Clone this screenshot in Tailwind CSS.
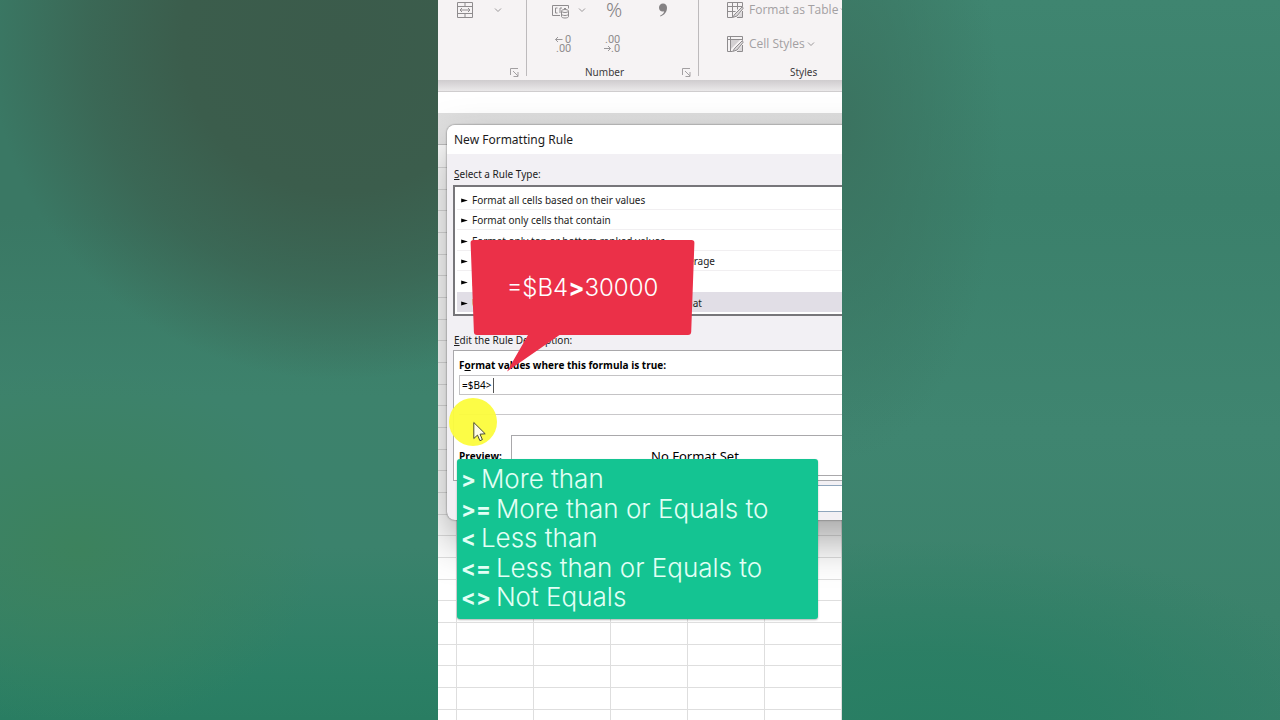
<!DOCTYPE html>
<html lang="en">
<head>
    <meta charset="UTF-8">
    <meta name="viewport" content="width=device-width, initial-scale=1.0">
    <title>New Formatting Rule</title>
    <script src="https://cdn.jsdelivr.net/npm/@tailwindcss/browser@4"></script>
</head>
<body class="flex h-screen overflow-hidden bg-[#3e836d] font-['Noto_Sans','Open_Sans',sans-serif]">

<!-- Left backdrop -->
<div class="flex-1 bg-[radial-gradient(ellipse_350px_340px_at_340px_40px,#3b5b4b_0%,#3b5d4c_45%,#3b5d4c99_72%,#3b5d4c00_100%),radial-gradient(ellipse_240px_180px_at_80px_550px,#3c825d_0%,#3c825d00_100%),linear-gradient(to_bottom,#3a7864_0%,#3a7864_30%,#3d826c_55%,#3b826c_76%,#2b7f65_94%,#297d62_100%)]"></div>

<!-- Video frame -->
<main class="relative flex h-full w-101 shrink-0 flex-col overflow-hidden bg-white">

    <!-- Ribbon -->
    <header class="flex h-20 shrink-0 bg-[#f6f3f4] text-[#a3a0a2]">
        <section class="flex w-[88px] shrink-0 flex-col">
            <div class="flex h-5 items-center gap-5 pl-[18px]">
                <button aria-label="Merge and center">
                    <svg class="size-[18px]" viewBox="0 0 18 18" fill="none" stroke="#8f8c8e"><path d="M1.500 1.500h15v15h-15zM1.500 5.500h15M1.500 12.500h15M9 1.500v4M9 12.500v4M4 9h10M6 7l-2 2 2 2M12 7l2 2-2 2"/></svg>
                </button>
                <button aria-label="Merge options">
                    <svg class="size-2" viewBox="0 0 8 8" fill="none" stroke="#9b989a"><path d="M1 2.500l3 3 3-3"/></svg>
                </button>
            </div>
            <div class="mt-auto flex h-4 items-center justify-end pr-[7px]">
                <button aria-label="Alignment settings">
                    <svg class="size-[9px]" viewBox="0 0 9 9" fill="none" stroke="#a3a0a2"><path d="M.5 7V.5H8M3 3l5 5M8 4v4.500H3.500"/></svg>
                </button>
            </div>
        </section>
        <div class="h-[76px] w-px shrink-0 bg-[#bdbabc]"></div>

        <section class="flex w-[171px] shrink-0 flex-col">
            <div class="flex h-5 items-center pl-6">
                <button aria-label="Accounting format">
                    <svg class="h-[18px] w-5" viewBox="0 0 20 18" fill="none" stroke="#8f8c8e"><path d="M9 14.500H1.500v-10h16v3M6.500 7H4.500v5h2M11 7H9v5M13 7.500h2"/><path fill="#f6f3f4" d="M10.500 10v5.500c0 2 7 2 7 0V10"/><ellipse cx="14" cy="10" rx="3.500" ry="1.500" fill="#f6f3f4"/><path d="M10.500 13c0 2 7 2 7 0"/></svg>
                </button>
                <button aria-label="Accounting options" class="ml-[7px]">
                    <svg class="size-2" viewBox="0 0 8 8" fill="none" stroke="#9b989a"><path d="M1 2.500l3 3 3-3"/></svg>
                </button>
                <button class="ml-5 text-xl leading-5 font-light text-[#858284]">%</button>
                <button aria-label="Comma style" class="ml-9">
                    <svg class="h-[14px] w-[10px]" viewBox="0 0 10 14" fill="#858284"><path d="M5 .5C7.500.5 9 2.300 9 4.800 9 9 6.500 12 2.500 13.500L2 12.800C4.500 11.500 6 10 6.200 8.200 5.700 8.500 5.200 8.600 4.600 8.600 2.500 8.600 1 7 1 4.800 1 2.300 2.700.5 5 .5z"/></svg>
                </button>
            </div>
            <div class="mt-3 flex h-6 items-center gap-[29px] pl-[27px]">
                <button aria-label="Increase decimal">
                    <svg class="h-[18px] w-5" viewBox="0 0 20 18" fill="#8f8c8e" font-family="Roboto" font-size="11"><path d="M8.500 4.500H1.500M4 2L1.500 4.500 4 7" fill="none" stroke="#9b989a"/><text x="11" y="8">0</text><text x="2" y="17">.00</text></svg>
                </button>
                <button aria-label="Decrease decimal">
                    <svg class="h-[18px] w-5" viewBox="0 0 20 18" fill="#8f8c8e" font-family="Roboto" font-size="11"><path d="M1 13.500h6.500M5 11l2.500 2.500L5 16" fill="none" stroke="#9b989a"/><text x="2" y="8">.00</text><text x="8" y="17">.0</text></svg>
                </button>
            </div>
            <div class="mt-auto flex h-4 items-center justify-end pr-[7px]">
                <h2 class="flex-1 pl-[58px] text-[10px] leading-4 text-[#3c3a3c]">Number</h2>
                <button aria-label="Number settings">
                    <svg class="size-[9px]" viewBox="0 0 9 9" fill="none" stroke="#a3a0a2"><path d="M.5 7V.5H8M3 3l5 5M8 4v4.500H3.500"/></svg>
                </button>
            </div>
        </section>
        <div class="h-[76px] w-px shrink-0 bg-[#bdbabc]"></div>

        <section class="flex w-[210px] shrink-0 flex-col pl-[27px]">
            <button class="flex h-5 items-center gap-[5px]">
                <svg class="size-[18px]" viewBox="0 0 18 18" fill="none" stroke="#8f8c8e"><path d="M16.500 5V1.500h-15v15H6M1.500 5.500h15M1.500 10.500h8M6.500 1.500v15M11.500 1.500v7"/><path d="M16.500 5.500L9 13l-2.500 3.500L11 15l6-7.500zM16.500 10v6.500H11" fill="#dcd9db"/></svg>
                <span class="font-['Open_Sans'] text-xs">Format as Table</span>
                <svg class="-ml-[3px] size-2" viewBox="0 0 8 8" fill="none" stroke="#9b989a"><path d="M1 2.500l3 3 3-3"/></svg>
            </button>
            <button class="mt-3 flex h-6 items-center gap-[5px]">
                <svg class="size-[18px]" viewBox="0 0 18 18" fill="none" stroke="#8f8c8e"><path d="M5 5h9L5 14z" fill="#d3d0d2" stroke="none"/><path d="M16.500 5V1.500h-15v15H6M1.500 4.500h15M4.500 1.500v15"/><path d="M16.500 5.500L9 13l-2.500 3.500L11 15l6-7.500zM16.500 10v6.500H11" fill="#dcd9db"/></svg>
                <span class="font-['Open_Sans'] text-xs">Cell Styles</span>
                <svg class="-ml-[3px] size-2" viewBox="0 0 8 8" fill="none" stroke="#9b989a"><path d="M1 2.500l3 3 3-3"/></svg>
            </button>
            <h2 class="mt-auto h-4 pl-16 text-[10px] leading-4 text-[#3c3a3c]">Styles</h2>
        </section>
    </header>

    <!-- Formula bar and column headers -->
    <div class="h-3 shrink-0 border-b border-[#cfcdce] bg-linear-to-b from-[#cfccce] to-[#ebe9ea]"></div>
    <div class="h-[21px] shrink-0 bg-white"></div>
    <div class="h-8 shrink-0 border-b border-[#bfbfbf] bg-linear-to-b from-[#dedede] to-[#e6e6e6]"></div>

    <!-- Sheet -->
    <table class="w-[480px] shrink-0 table-fixed border-collapse">
        <colgroup>
            <col class="w-[18px]"><col class="w-[77px]"><col class="w-[77px]"><col class="w-[77px]"><col class="w-[77px]"><col class="w-[77px]"><col class="w-[77px]">
        </colgroup>
        <tbody id="sheet"></tbody>
    </table>

    <!-- Dialog -->
    <form class="absolute left-[9px] top-[125px] flex w-[540px] flex-col overflow-hidden rounded-lg bg-[#f2f0f4] text-[10px] text-[#1c1c1c] shadow-[0_20px_44px_rgba(0,0,0,0.36),0_0_2px_rgba(0,0,0,0.6)]">
        <h1 class="h-[29px] bg-white pl-[7px] text-xs leading-[29px]">New Formatting Rule</h1>
        <div class="flex flex-col px-[6px]">
            <p class="mt-[10px] h-5 pl-px leading-5"><u>S</u>elect a Rule Type:</p>
            <ul class="mt-[1px] border-2 border-[#77767a] bg-white p-[2px]">
                <li class="flex h-[21px] items-center gap-1 border-b border-[#f1eff1] pl-1 pt-[2px]"><svg class="h-[5px] w-[7px]" viewBox="0 0 8 6"><path d="M0 .5L8 3 0 5.500z"/></svg>Format all cells based on their values</li>
                <li class="flex h-5 items-center gap-1 border-b border-[#f1eff1] pl-1 pt-[2px]"><svg class="h-[5px] w-[7px]" viewBox="0 0 8 6"><path d="M0 .5L8 3 0 5.500z"/></svg>Format only cells that contain</li>
                <li class="flex h-[21px] items-center gap-1 border-b border-[#f1eff1] pl-1 pt-[2px]"><svg class="h-[5px] w-[7px]" viewBox="0 0 8 6"><path d="M0 .5L8 3 0 5.500z"/></svg>Format only top or bottom ranked values</li>
                <li class="flex h-5 items-center gap-1 border-b border-[#f1eff1] pl-1 pt-[2px]"><svg class="h-[5px] w-[7px]" viewBox="0 0 8 6"><path d="M0 .5L8 3 0 5.500z"/></svg>Format only values that are above or below average</li>
                <li class="flex h-[21px] items-center gap-1 pl-1 pt-[2px]"><svg class="h-[5px] w-[7px]" viewBox="0 0 8 6"><path d="M0 .5L8 3 0 5.500z"/></svg>Format only unique or duplicate values</li>
                <li class="flex h-5 items-center gap-1 bg-[#e1dee6] pl-1 pt-[2px]"><svg class="h-[5px] w-[7px]" viewBox="0 0 8 6"><path d="M0 .5L8 3 0 5.500z"/></svg>Use a formula to determine which cells to format</li>
            </ul>
            <p class="mt-[14px] h-5 pl-px leading-5"><u>E</u>dit the Rule Description:</p>
            <div class="flex h-[131px] flex-col border border-[#a9a8ab] bg-white pl-[5px]">
                <label for="formula" class="mt-1 h-5 font-['Open_Sans'] font-bold leading-5 text-black">F<u>o</u>rmat values where this formula is true:</label>
                <input id="formula" type="text" value="=$B4&gt;" class="h-5 border border-[#c4c3c5] px-[2px] text-black outline-none">
                <hr class="mt-[19px] border-[#c9c8ca]">
                <div class="mt-5 flex h-[41px] gap-[9px]">
                    <span class="w-[43px] pt-[13px] font-['Open_Sans'] font-bold leading-4 text-black">Preview:</span>
                    <div class="w-[368px] border border-[#a9a8ab] pt-3 text-center text-[13px] leading-4 text-black">No Format Set</div>
                    <button type="button" class="self-center border border-[#a9a8ab] px-4">Format...</button>
                </div>
            </div>
            <div class="mb-2 mt-1 flex h-[27px] justify-end gap-2">
                <button type="button" class="w-[100px] border border-[#8fa6bd] bg-white">OK</button>
                <button type="button" class="w-[60px] border border-[#a9a8ab] bg-white">Cancel</button>
            </div>
        </div>
    </form>

    <!-- Text caret, pointer highlight and pointer -->
    <div class="absolute left-[55px] top-[378px] h-[15px] w-px bg-[#555]"></div>
    <div class="absolute left-[11px] top-[398px] size-12 rounded-full bg-[#fcfc3c] opacity-95"></div>
    <svg class="absolute left-[35px] top-[421px] h-[21px] w-[14px]" viewBox="0 0 14 21" fill="#fffde8" stroke="#4a4a30"><path d="M.8 1.500v16l3.700-3.400 2.400 5.600 2.500-1.100L7 13.200l5.200-.4z"/></svg>

    <!-- Red speech bubble -->
    <div class="absolute left-8 top-[240px] h-[132px] w-[225px]">
        <svg class="absolute inset-0 size-full" viewBox="0 0 225 132" fill="#eb3048"><path d="M3.500 0H221.500Q224.500 0 224.400 3L221.200 92Q221 95 218 95H89.500L37 131.500 58 95H7Q4 95 3.900 92L.6 3Q.5 0 3.500 0z"/></svg>
        <p class="relative text-center font-['Inter',sans-serif] text-2xl font-light leading-[95px] text-white">=$B4<b class="font-bold">&gt;</b>30000</p>
    </div>

    <!-- Green legend -->
    <ul class="absolute left-[19px] top-[459px] h-[160px] w-[361px] rounded-[3px] bg-[#14c492] pl-[4px] pt-[5px] font-['Inter',sans-serif] text-[26px] font-light leading-[30px] text-[#e2fff5] shadow-[0_1px_2px_rgba(0,0,0,0.3)]">
        <li class="flex h-[30px] items-center gap-[5px]"><b class="text-[22px] font-bold">&gt;</b> More than</li>
        <li class="flex h-[29px] items-center gap-[5px]"><b class="text-[22px] font-bold">&gt;=</b> More than or Equals to</li>
        <li class="flex h-[30px] items-center gap-[5px]"><b class="text-[22px] font-bold">&lt;</b> Less than</li>
        <li class="flex h-[29px] items-center gap-[5px]"><b class="text-[22px] font-bold">&lt;=</b> Less than or Equals to</li>
        <li class="flex h-[30px] items-center gap-[5px]"><b class="text-[22px] font-bold">&lt;&gt;</b> Not Equals</li>
    </ul>
</main>

<!-- Right backdrop -->
<div class="flex-1 bg-[radial-gradient(ellipse_160px_330px_at_0px_130px,#3b7360_0%,#3b736000_100%),radial-gradient(ellipse_440px_190px_at_80px_730px,#287e63_0%,#287e63cc_40%,#287e6300_100%),linear-gradient(to_bottom,#3f8570_0%,#3b806b_28%,#3f8570_60%,#3b826b_85%,#37806a_100%)]"></div>

<script>
    // three rows add up to 65px, so every third one is a pixel shorter
    const sheet = document.getElementById('sheet');
    for (let r = 0; r < 27; r++) {
        const row = sheet.insertRow();
        row.className = r % 3 === 2 ? 'h-[21px]' : 'h-[22px]';
        for (let c = 0; c < 7; c++) {
            row.insertCell().className = 'border-b border-r border-[#dedede] p-0';
        }
    }
</script>
</body>
</html>
